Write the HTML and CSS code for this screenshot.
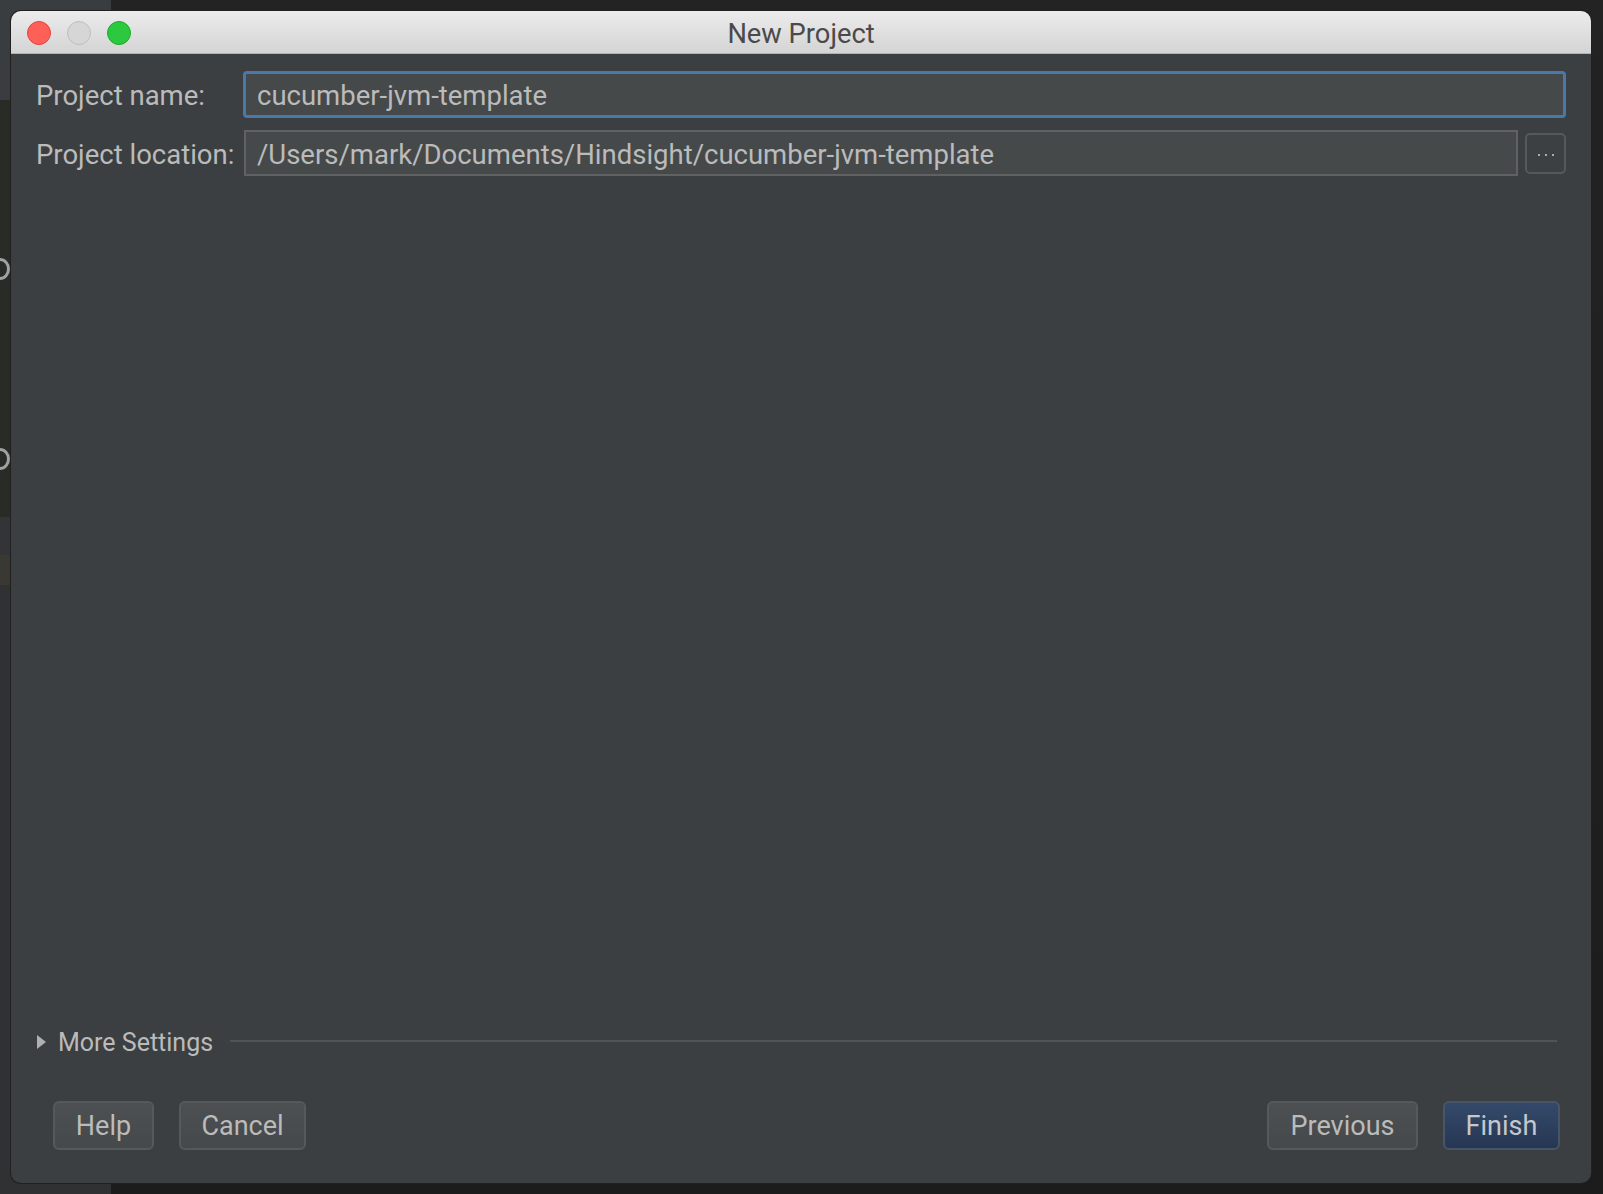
FILE: index.html
```html
<!DOCTYPE html>
<html lang="en">
<head>
    <meta charset="UTF-8">
    <meta name="viewport" content="width=device-width, initial-scale=1.0">
    <title>New Project</title>
    <link rel="stylesheet" href="styles.css">
</head>
<body>

<!-- IDE behind the dialog -->
<div class="desktop">
    <div class="ide-side">
        <div class="side-top"></div>
        <div class="side-editor">
            <span class="ring ring-1"></span>
            <span class="ring ring-2"></span>
        </div>
        <div class="side-gap"></div>
        <div class="side-brown"></div>
        <div class="side-rest"></div>
    </div>
    <div class="ide-dark"></div>
</div>

<div class="window">
    <div class="titlebar">
        <div class="lights">
            <span class="light red"></span>
            <span class="light grey"></span>
            <span class="light green"></span>
        </div>
        <div class="title">New Project</div>
    </div>

    <div class="content">
        <div class="row">
            <label class="label">Project name:</label>
            <div class="field focused">cucumber-jvm-template</div>
        </div>
        <div class="row row-location">
            <label class="label">Project location:</label>
            <div class="field plain">/Users/mark/Documents/Hindsight/cucumber-jvm-template</div>
            <div class="browse">
                <svg width="16" height="4" viewBox="0 0 16 4">
                    <rect x="0" y="1" width="2" height="2" fill="#a9abad"/>
                    <rect x="7" y="1" width="2" height="2" fill="#a9abad"/>
                    <rect x="14" y="1" width="2" height="2" fill="#a9abad"/>
                </svg>
            </div>
        </div>

        <div class="spacer"></div>

        <div class="more">
            <svg class="arrow" width="9" height="14" viewBox="0 0 9 14">
                <path d="M0 0 L9 7 L0 14 Z" fill="#aeb0b2"/>
            </svg>
            <span class="more-text">More Settings</span>
            <span class="more-line"></span>
        </div>

        <div class="buttons">
            <div class="btn btn-help">Help</div>
            <div class="btn btn-cancel">Cancel</div>
            <div class="btn-gap"></div>
            <div class="btn btn-prev">Previous</div>
            <div class="btn btn-finish">Finish</div>
        </div>
    </div>
</div>

</body>
</html>
```

FILE: styles.css
```css
html, body {
    margin: 0;
    height: 100%;
}
body {
    font-family: Roboto, "Liberation Sans", sans-serif;
    background-color: #1e1e1e;
    overflow: hidden;
}

/* backdrop */
.desktop {
    display: flex;
    height: 100%;
}
.ide-side {
    width: 111px;
    display: flex;
    flex-direction: column;
}
.side-top {
    height: 100px;
    background-color: #3a3d3f;
}
.side-editor {
    height: 417px;
    background-color: #272c27;
    position: relative;
    overflow: hidden;
}
.ring {
    position: absolute;
    left: -10px;
    width: 14px;
    height: 16px;
    border: 3px solid #9fa1a3;
    border-radius: 50%;
}
.ring-1 { top: 158px; }
.ring-2 { top: 348px; }
.side-gap {
    height: 38px;
    background-color: #323436;
}
.side-brown {
    height: 30px;
    background-color: #3a3833;
}
.side-rest {
    flex: 1;
    background-color: #2f3133;
}
.ide-dark {
    flex: 1;
    background: linear-gradient(#232323, #1c1c1c);
}

/* dialog window */
.window {
    position: absolute;
    left: 11px;
    top: 11px;
    width: 1580px;
    height: 1172px;
    border-radius: 10px;
    background-color: #3c3f41;
    overflow: hidden;
    display: flex;
    flex-direction: column;
    box-shadow: 0 0 0 1px #202020;
}
.titlebar {
    height: 42px;
    flex-shrink: 0;
    border-bottom: 1px solid #b2b2b2;
    background: linear-gradient(#ececec, #d4d4d4);
    display: flex;
    align-items: center;
    justify-content: center;
    position: relative;
}
.lights {
    position: absolute;
    left: 16px;
    top: 10px;
    display: flex;
    gap: 16px;
}
.light {
    width: 22px;
    height: 22px;
    border-radius: 50%;
    border: 1px solid transparent;
}
.red {
    background-color: #fe5f57;
    border-color: #e0443e;
}
.grey {
    background-color: #d6d6d6;
    border-color: #bebebe;
}
.green {
    background-color: #2bc840;
    border-color: #1aab29;
}
.title {
    font-size: 27.3px;
    color: #4a4a4a;
    margin-top: 4px;
}

.content {
    flex: 1;
    display: flex;
    flex-direction: column;
    padding: 17px 25px 33px 25px;
}
.row {
    display: flex;
    align-items: center;
    height: 47px;
}
.row-location {
    margin-top: 12px;
    height: 46px;
}
.label {
    width: 207px;
    flex-shrink: 0;
    font-size: 27.5px;
    color: #bbbbbb;
    padding-top: 2px;
}
.field {
    flex: 1;
    box-sizing: border-box;
    height: 100%;
    background-color: #45494a;
    color: #bbbbbb;
    font-size: 27.5px;
    display: flex;
    align-items: center;
}
.focused {
    border: 3px solid #4a78ab;
    border-radius: 4px;
    padding: 2px 0 0 11px;
}
.plain {
    border: 2px solid #5f6163;
    margin-left: 1px;
    padding: 2px 0 0 11px;
}
.browse {
    width: 41px;
    height: 41px;
    box-sizing: border-box;
    margin-left: 7px;
    border: 2px solid #56595b;
    border-radius: 5px;
    background-color: #3d4042;
    display: flex;
    align-items: center;
    justify-content: center;
    padding-top: 4px;
}

.spacer {
    flex: 1;
}

.more {
    display: flex;
    align-items: center;
    height: 30px;
    padding-left: 1px;
    padding-right: 9px;
}
.arrow {
    margin-right: 12px;
}
.more-text {
    font-size: 25px;
    color: #bbbbbb;
}
.more-line {
    flex: 1;
    height: 2px;
    background-color: #515456;
    margin-left: 17px;
    margin-top: -2px;
}

.buttons {
    display: flex;
    margin-top: 44px;
    padding-left: 17px;
    margin-right: 6px;
    gap: 25px;
}
.btn {
    height: 49px;
    box-sizing: border-box;
    border: 2px solid #56595b;
    border-radius: 6px;
    background: linear-gradient(#4c5052, #45494b);
    color: #bbbbbb;
    font-size: 27px;
    display: flex;
    align-items: center;
    justify-content: center;
}
.btn-help { width: 101px; }
.btn-cancel { width: 127px; }
.btn-prev { width: 151px; }
.btn-finish {
    width: 117px;
    background: linear-gradient(#34496a, #263753);
    border-color: #465568;
    color: #c4c8cc;
}
.btn-gap {
    flex: 1;
    margin-left: -25px;
}
```
